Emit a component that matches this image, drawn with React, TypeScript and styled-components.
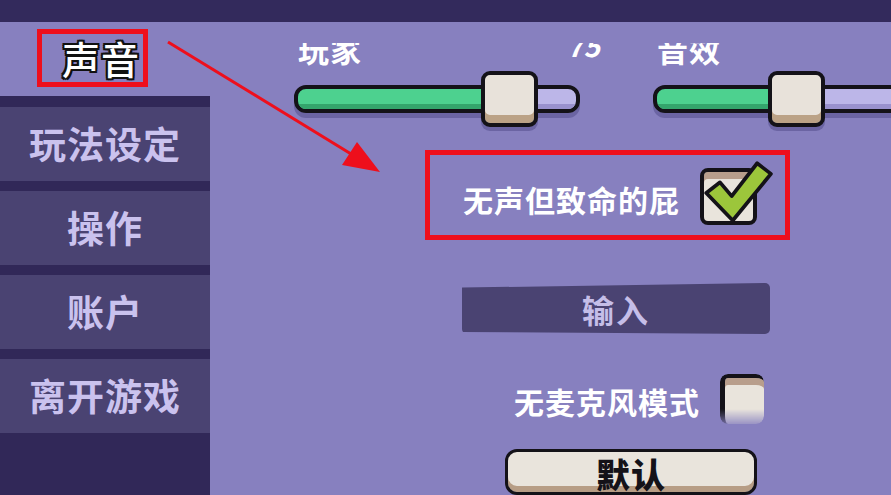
import styled, { createGlobalStyle } from "styled-components";

const GlobalStyle = createGlobalStyle`
  html, body {
    margin: 0;
    padding: 0;
    height: 100%;
    overflow: hidden;
  }
  #root {
    height: 100%;
  }
  * {
    box-sizing: border-box;
  }
`;

const FONT = `"Noto Sans CJK SC", "Noto Sans", sans-serif`;

const Screen = styled.div`
  position: relative;
  width: 100%;
  height: 100%;
  display: flex;
  flex-direction: column;
  background: #8780bf;
  font-family: ${FONT};
  overflow: hidden;
`;

const TopBar = styled.div`
  height: 22px;
  flex-shrink: 0;
  background: #332a5c;
`;

const Body = styled.div`
  flex: 1;
  display: flex;
  min-height: 0;
`;

const LeftColumn = styled.div`
  width: 210px;
  flex-shrink: 0;
  display: flex;
  flex-direction: column;
`;

const TitleArea = styled.div`
  height: 74px;
  display: flex;
  justify-content: center;
  align-items: flex-start;
  padding-top: 7px;
`;

const TitleBox = styled.div`
  position: relative;
  width: 111px;
  height: 58px;
  margin-left: -26px;
  display: flex;
  align-items: center;
  justify-content: center;
  padding-left: 18px;
`;

const Title = styled.h1`
  margin: 0;
  font-size: 38px;
  line-height: 1;
  font-weight: 500;
  color: #fff;
  letter-spacing: 1px;
  white-space: nowrap;
  text-shadow:
    2px 0 0 #111, -2px 0 0 #111, 0 2px 0 #111, 0 -2px 0 #111,
    2px 2px 0 #111, -2px -2px 0 #111, 2px -2px 0 #111, -2px 2px 0 #111;
`;

const RedFrame = styled.div<{ $top: number; $right: number; $bottom: number; $left: number }>`
  position: absolute;
  top: ${(p) => p.$top}px;
  right: ${(p) => p.$right}px;
  bottom: ${(p) => p.$bottom}px;
  left: ${(p) => p.$left}px;
  border: 5px solid #ee0f1c;
  pointer-events: none;
`;

const Sidebar = styled.nav`
  flex: 1;
  background: #312858;
  padding-top: 11px;
  display: flex;
  flex-direction: column;
  gap: 10px;
`;

const NavItem = styled.div`
  height: 74px;
  background: #4a4372;
  display: flex;
  align-items: center;
  justify-content: center;
  color: #cac2ee;
  font-size: 37px;
  font-weight: 700;
  letter-spacing: 1px;
  white-space: nowrap;
  padding-bottom: 2px;
`;

const Content = styled.div`
  flex: 1;
  display: flex;
  flex-direction: column;
  padding-top: 21px;
  min-width: 0;
`;

const Viewport = styled.div`
  flex: 1;
  overflow: hidden;
`;

const ScrollInner = styled.div`
  margin-top: -12px;
  display: flex;
  flex-direction: column;
`;

const SliderRow = styled.div`
  display: flex;
  gap: 73px;
  padding-left: 84px;
`;

const SliderBlock = styled.div`
  width: 286px;
  flex-shrink: 0;
  display: flex;
  flex-direction: column;
`;

const SliderHeader = styled.div`
  height: 36px;
  margin-bottom: 4px;
  margin-right: -20px;
  display: flex;
  justify-content: space-between;
  align-items: flex-start;
  padding-left: 4px;
`;

const SliderLabel = styled.span`
  color: #fff;
  font-size: 31px;
  line-height: 36px;
  font-weight: 700;
  letter-spacing: 1px;
  white-space: nowrap;
`;

const SliderValue = styled.span`
  color: #fff;
  font-size: 28px;
  line-height: 28px;
  font-weight: 700;
  font-style: italic;
`;

const SliderBody = styled.div`
  position: relative;
  height: 56px;
  display: flex;
  align-items: center;
`;

const Track = styled.div<{ $fill: number }>`
  width: 100%;
  height: 28px;
  border: 4px solid #141218;
  border-radius: 12px;
  overflow: hidden;
  background: linear-gradient(
    to right,
    #4dd18f 0%,
    #4dd18f ${(p) => p.$fill}%,
    #bcb6e8 ${(p) => p.$fill}%,
    #bcb6e8 100%
  );
  box-shadow: 0 5px 0 #6b64a3;
  position: relative;

  &::after {
    content: "";
    position: absolute;
    left: 0;
    right: 0;
    bottom: 0;
    height: 5px;
    background: linear-gradient(
      to right,
      #34a56c 0%,
      #34a56c ${(p) => p.$fill}%,
      #9991cd ${(p) => p.$fill}%,
      #9991cd 100%
    );
  }
`;

const Thumb = styled.div`
  position: absolute;
  top: 0;
  width: 57px;
  height: 56px;
  margin-left: -28px;
  border: 4px solid #141218;
  border-radius: 9px;
  background: #e8e2da;
  box-shadow: inset 0 -8px 0 #bba286, 0 4px 0 #6b64a3;
`;

const SettingsColumn = styled.div`
  width: 308px;
  margin-left: 252px;
  display: flex;
  flex-direction: column;
`;

const ToggleRow = styled.div<{ $top: number; $right: number }>`
  position: relative;
  margin-top: ${(p) => p.$top}px;
  margin-right: ${(p) => p.$right}px;
  display: flex;
  justify-content: flex-end;
  align-items: center;
  gap: 20px;
`;

const ToggleLabel = styled.span`
  color: #fff;
  font-size: 30px;
  font-weight: 700;
  line-height: 1;
  letter-spacing: 1px;
  white-space: nowrap;
  padding-top: 4px;
`;

const CheckBox = styled.div<{ $fading?: boolean }>`
  position: relative;
  width: ${(p) => (p.$fading ? 44 : 57)}px;
  height: ${(p) => (p.$fading ? 50 : 57)}px;
  flex-shrink: 0;
  border: 4px solid #141218;
  border-width: ${(p) => (p.$fading ? "4px 0 0 5px" : "4px")};
  border-radius: 8px;
  background: #e9e4dc;
  box-shadow: inset 0 7px 0 #b89e8c;
  ${(p) =>
    p.$fading &&
    `mask-image: linear-gradient(to bottom, #000 70%, rgba(0,0,0,0.2) 100%);
     -webkit-mask-image: linear-gradient(to bottom, #000 70%, rgba(0,0,0,0.2) 100%);`}
`;

const CheckMark = styled.svg`
  position: absolute;
  left: -2px;
  top: -11px;
  width: 70px;
  height: 66px;
  overflow: visible;
`;

const SectionBar = styled.div`
  margin-top: 58px;
  height: 51px;
  background: #4a4372;
  border-radius: 5px;
  clip-path: polygon(0 9%, 100% 0, 100% 100%, 0 96%);
  display: flex;
  align-items: center;
  justify-content: center;
  color: #c5bee8;
  font-size: 32px;
  font-weight: 700;
  letter-spacing: 2px;
`;

const DefaultButton = styled.button`
  margin-top: 25px;
  margin-left: 43px;
  width: 252px;
  height: 46px;
  border: 3px solid #141218;
  border-radius: 12px;
  background: #e9e4dc;
  box-shadow: inset 0 -6px 0 #b79d85;
  font-family: ${FONT};
  font-size: 34px;
  font-weight: 900;
  line-height: 1;
  color: #141218;
  display: flex;
  align-items: center;
  justify-content: center;
  padding: 4px 0 0;
  letter-spacing: 1px;
`;

const Annotation = styled.svg`
  position: absolute;
  left: 0;
  top: 0;
  width: 100%;
  height: 100%;
  pointer-events: none;
`;

const sliders = [
  { label: "玩家", value: 75 },
  { label: "音效", value: 50 },
];

const navItems = ["玩法设定", "操作", "账户", "离开游戏"];

export default function App() {
  return (
    <Screen>
      <GlobalStyle />
      <TopBar />
      <Body>
        <LeftColumn>
          <TitleArea>
            <TitleBox>
              <Title>声音</Title>
              <RedFrame $top={0} $right={0} $bottom={0} $left={0} />
            </TitleBox>
          </TitleArea>
          <Sidebar>
            {navItems.map((item) => (
              <NavItem key={item}>{item}</NavItem>
            ))}
          </Sidebar>
        </LeftColumn>

        <Content>
          <Viewport>
            <ScrollInner>
              <SliderRow>
                {sliders.map((s, i) => (
                  <SliderBlock key={s.label}>
                    <SliderHeader>
                      <SliderLabel>{s.label}</SliderLabel>
                      {i === 0 && <SliderValue>75</SliderValue>}
                    </SliderHeader>
                    <SliderBody>
                      <Track $fill={s.value} />
                      <Thumb style={{ left: `${s.value}%` }} />
                    </SliderBody>
                  </SliderBlock>
                ))}
              </SliderRow>

              <SettingsColumn>
                <ToggleRow $top={41} $right={13}>
                  <ToggleLabel>无声但致命的屁</ToggleLabel>
                  <CheckBox>
                    <CheckMark viewBox="0 0 66 62">
                      <path
                        d="M4 30 L17 20 L28 33 L52 2 L65 12 L29 56 Z"
                        fill="#9cc63b"
                        stroke="#141218"
                        strokeWidth="3.5"
                        strokeLinejoin="round"
                      />
                    </CheckMark>
                  </CheckBox>
                  <RedFrame $top={-18} $right={-33} $bottom={-15} $left={-37} />
                </ToggleRow>

                <SectionBar>输入</SectionBar>

                <ToggleRow $top={40} $right={6}>
                  <ToggleLabel>无麦克风模式</ToggleLabel>
                  <CheckBox $fading />
                </ToggleRow>

                <DefaultButton>默认</DefaultButton>
              </SettingsColumn>
            </ScrollInner>
          </Viewport>
        </Content>
      </Body>

      <Annotation viewBox="0 0 891 495">
        <line x1="168" y1="42" x2="356" y2="157" stroke="#ee0f1c" strokeWidth="3" />
        <polygon points="380,172 342,165 357,142" fill="#ee0f1c" />
      </Annotation>
    </Screen>
  );
}
